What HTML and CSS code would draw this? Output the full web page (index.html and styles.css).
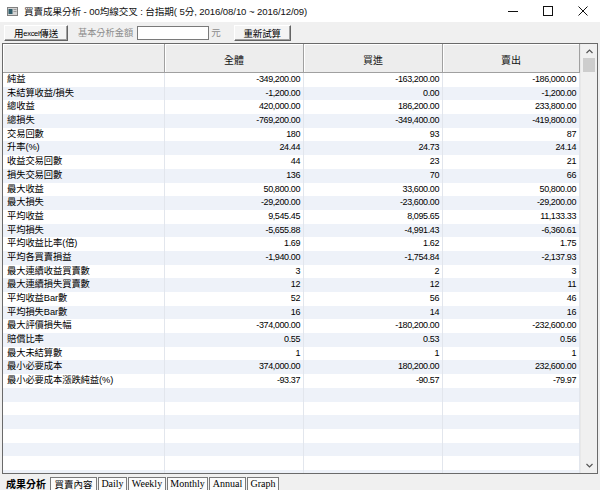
FILE: index.html
```html
<!DOCTYPE html>
<html lang="zh-Hant">
<head>
<meta charset="utf-8">
<title>買賣成果分析</title>
<link rel="stylesheet" href="styles.css">
</head>
<body>
<div class="win">
  <div class="titlebar">
    <svg class="appicon" width="11" height="9" viewBox="0 0 11 9"><rect x="0.5" y="0.5" width="10" height="8" fill="#d4d4d4" stroke="#808080"/><rect x="1.5" y="2" width="4" height="5" fill="#2f5d6b"/><rect x="6.5" y="2" width="3" height="1" fill="#9a9a9a"/><rect x="6.5" y="4" width="3" height="1" fill="#9a9a9a"/></svg>
    <div class="title">買賣成果分析 - 00均線交叉 : 台指期( 5分, 2016/08/10 ~ 2016/12/09)</div>
    <div class="controls">
      <div class="ctl"><svg width="10" height="10" viewBox="0 0 10 10"><line x1="0" y1="5.5" x2="10" y2="5.5" stroke="#111" stroke-width="1"/></svg></div>
      <div class="ctl"><svg width="10" height="10" viewBox="0 0 10 10"><rect x="0.5" y="0.5" width="9" height="9" fill="none" stroke="#111" stroke-width="1"/></svg></div>
      <div class="ctl"><svg width="10" height="10" viewBox="0 0 10 10"><path d="M0.5 0.5 L9.5 9.5 M9.5 0.5 L0.5 9.5" stroke="#111" stroke-width="1"/></svg></div>
    </div>
  </div>

  <div class="toolbar">
    <div class="btn b1">用<span class="small">excel</span>傳送</div>
    <div class="lbl">基本分析金額</div>
    <div class="input"></div>
    <div class="unit">元</div>
    <div class="btn b2">重新試算</div>
  </div>

  <div class="grid">
    <div class="table">
      <div class="row hdr">
        <div class="hc"></div>
        <div class="hc">全體</div>
        <div class="hc">買進</div>
        <div class="hc">賣出</div>
      </div>
      <div class="row"><div class="c l">純益</div><div class="c n">-349,200.00</div><div class="c n">-163,200.00</div><div class="c n">-186,000.00</div></div>
      <div class="row"><div class="c l">未結算收益/損失</div><div class="c n">-1,200.00</div><div class="c n">0.00</div><div class="c n">-1,200.00</div></div>
      <div class="row"><div class="c l">總收益</div><div class="c n">420,000.00</div><div class="c n">186,200.00</div><div class="c n">233,800.00</div></div>
      <div class="row"><div class="c l">總損失</div><div class="c n">-769,200.00</div><div class="c n">-349,400.00</div><div class="c n">-419,800.00</div></div>
      <div class="row"><div class="c l">交易回數</div><div class="c n">180</div><div class="c n">93</div><div class="c n">87</div></div>
      <div class="row"><div class="c l">升率(%)</div><div class="c n">24.44</div><div class="c n">24.73</div><div class="c n">24.14</div></div>
      <div class="row"><div class="c l">收益交易回數</div><div class="c n">44</div><div class="c n">23</div><div class="c n">21</div></div>
      <div class="row"><div class="c l">損失交易回數</div><div class="c n">136</div><div class="c n">70</div><div class="c n">66</div></div>
      <div class="row"><div class="c l">最大收益</div><div class="c n">50,800.00</div><div class="c n">33,600.00</div><div class="c n">50,800.00</div></div>
      <div class="row"><div class="c l">最大損失</div><div class="c n">-29,200.00</div><div class="c n">-23,600.00</div><div class="c n">-29,200.00</div></div>
      <div class="row"><div class="c l">平均收益</div><div class="c n">9,545.45</div><div class="c n">8,095.65</div><div class="c n">11,133.33</div></div>
      <div class="row"><div class="c l">平均損失</div><div class="c n">-5,655.88</div><div class="c n">-4,991.43</div><div class="c n">-6,360.61</div></div>
      <div class="row"><div class="c l">平均收益比率(倍)</div><div class="c n">1.69</div><div class="c n">1.62</div><div class="c n">1.75</div></div>
      <div class="row"><div class="c l">平均各買賣損益</div><div class="c n">-1,940.00</div><div class="c n">-1,754.84</div><div class="c n">-2,137.93</div></div>
      <div class="row"><div class="c l">最大連續收益買賣數</div><div class="c n">3</div><div class="c n">2</div><div class="c n">3</div></div>
      <div class="row"><div class="c l">最大連續損失買賣數</div><div class="c n">12</div><div class="c n">12</div><div class="c n">11</div></div>
      <div class="row"><div class="c l">平均收益Bar數</div><div class="c n">52</div><div class="c n">56</div><div class="c n">46</div></div>
      <div class="row"><div class="c l">平均損失Bar數</div><div class="c n">16</div><div class="c n">14</div><div class="c n">16</div></div>
      <div class="row"><div class="c l">最大評價損失幅</div><div class="c n">-374,000.00</div><div class="c n">-180,200.00</div><div class="c n">-232,600.00</div></div>
      <div class="row"><div class="c l">賠償比率</div><div class="c n">0.55</div><div class="c n">0.53</div><div class="c n">0.56</div></div>
      <div class="row"><div class="c l">最大未結算數</div><div class="c n">1</div><div class="c n">1</div><div class="c n">1</div></div>
      <div class="row"><div class="c l">最小必要成本</div><div class="c n">374,000.00</div><div class="c n">180,200.00</div><div class="c n">232,600.00</div></div>
      <div class="row"><div class="c l">最小必要成本漲跌純益(%)</div><div class="c n">-93.37</div><div class="c n">-90.57</div><div class="c n">-79.97</div></div>
      <div class="row"><div class="c l"></div><div class="c n"></div><div class="c n"></div><div class="c n"></div></div>
      <div class="row"><div class="c l"></div><div class="c n"></div><div class="c n"></div><div class="c n"></div></div>
      <div class="row"><div class="c l"></div><div class="c n"></div><div class="c n"></div><div class="c n"></div></div>
      <div class="row"><div class="c l"></div><div class="c n"></div><div class="c n"></div><div class="c n"></div></div>
      <div class="row"><div class="c l"></div><div class="c n"></div><div class="c n"></div><div class="c n"></div></div>
      <div class="row"><div class="c l"></div><div class="c n"></div><div class="c n"></div><div class="c n"></div></div>
      <div class="row"><div class="c l"></div><div class="c n"></div><div class="c n"></div><div class="c n"></div></div>
    </div>
    <div class="vscroll">
      <div class="arrow up"><svg width="7" height="5" viewBox="0 0 7 5"><path d="M0.5 4 L3.5 1 L6.5 4" fill="none" stroke="#555" stroke-width="1.2"/></svg></div>
      <div class="thumb"></div>
      <div class="track"></div>
      <div class="arrow down"><svg width="7" height="5" viewBox="0 0 7 5"><path d="M0.5 1 L3.5 4 L6.5 1" fill="none" stroke="#555" stroke-width="1.2"/></svg></div>
    </div>
  </div>

  <div class="tabs">
    <div class="tab sel t1">成果分析</div>
    <div class="tab t2">買賣內容</div>
    <div class="tab t3">Daily</div>
    <div class="tab t4">Weekly</div>
    <div class="tab t5">Monthly</div>
    <div class="tab t6">Annual</div>
    <div class="tab t7">Graph</div>
  </div>
</div>
</body>
</html>
```

FILE: styles.css
```css
* { box-sizing: border-box; margin: 0; padding: 0; }
html, body { width: 600px; height: 490px; overflow: hidden; }
body {
  background: #f0f0f0;
  color: #000;
  font-family: "Liberation Sans", "Noto Sans CJK TC", sans-serif;
}
.win { width: 600px; height: 490px; display: flex; flex-direction: column; }

/* title bar */
.titlebar {
  flex: none; height: 22px; background: #fff;
  display: flex; align-items: center;
}
.appicon { margin-left: 7px; flex: none; }
.title {
  margin-left: 6px; font-size: 9.6px; letter-spacing: -0.1px;
  white-space: nowrap; color: #111;
}
.controls { margin-left: auto; display: flex; height: 22px; }
.ctl { width: 35px; height: 22px; display: flex; align-items: center; justify-content: center; }

/* toolbar */
.toolbar {
  flex: none; height: 21px; display: flex; align-items: flex-start;
  padding-top: 3px; padding-left: 4px; background: #f0f0f0;
}
.btn {
  height: 16px; font-size: 9.5px; display: flex; align-items: center; justify-content: center;
  background: #f4f4f4;
  border-top: 1px solid #fff; border-left: 1px solid #fff;
  border-right: 1px solid #646464; border-bottom: 1px solid #646464;
  box-shadow: inset -1px -1px 0 #a0a0a0;
  letter-spacing: -0.2px; white-space: nowrap;
}
.btn .small { font-size: 7.5px; letter-spacing: -0.3px; }
.b1 { width: 64px; }
.b2 { width: 57px; margin-left: 13px; }
.lbl { margin-left: 10px; font-size: 9.2px; color: #8c8c8c; line-height: 16px; white-space: nowrap; }
.input {
  margin-left: 4px; margin-top: 1px; width: 72px; height: 14px; background: #fff;
  border: 1px solid #7a7a7a;
}
.unit { margin-left: 2px; font-size: 9.5px; color: #8c8c8c; line-height: 16px; }

/* grid */
.grid {
  flex: none; margin-left: 2px; width: 596px; height: 431px;
  border: 1px solid #6a6a6a; background: #fff;
  display: flex; overflow: hidden;
}
.table { width: 577px; flex: none; overflow: hidden; }
.row {
  display: grid; grid-template-columns: 162px 139px 139px 137px;
  height: 13.7px; background: #fff;
}
.row:nth-child(odd) { background: #eef2f9; }
.row.hdr { height: 29px; background: #ededed; }
.hc {
  border-right: 1px solid #a0a0a0; border-bottom: 1px solid #a0a0a0;
  box-shadow: inset 1px 1px 0 #fff;
  font-size: 10px; display: flex; align-items: center; justify-content: center;
  padding-top: 3px; color: #111;
}
.c {
  border-right: 1px solid #e2e6ed; line-height: 13.7px; white-space: nowrap; overflow: hidden;
}
.c.l { padding-left: 4px; font-size: 9.3px; letter-spacing: -0.1px; }
.c.n { text-align: right; padding-right: 3px; font-size: 9px; letter-spacing: -0.4px; }

/* scrollbar */
.vscroll {
  width: 17px; flex: none; background: #f0f0f0;
  display: flex; flex-direction: column; align-items: center;
  border-left: 1px solid #e8e8e8;
}
.arrow { height: 14px; width: 100%; display: flex; align-items: center; justify-content: center; flex: none; }
.arrow.down { height: 16px; }
.thumb { width: 12px; height: 14px; background: #cdcdcd; flex: none; }
.track { flex: 1; }

/* tabs */
.tabs {
  flex: 1; display: flex; align-items: flex-start;
  padding-top: 3px; padding-left: 4px; background: #f0f0f0;
}
.tab {
  height: 13px; background: #fbfbfb;
  border: 1px solid #7a7a7a; border-bottom: none;
  font-family: "Liberation Serif", "Noto Sans CJK TC", serif; font-size: 10px;
  line-height: 12px; text-align: center;
  margin-left: 1px; white-space: nowrap;
}
.tab.sel {
  background: transparent; border-color: transparent;
  font-family: "Noto Sans CJK TC", sans-serif; font-weight: bold; font-size: 10px;
  margin-left: 0;
}
.t1 { width: 44px; }
.t2 { width: 47px; margin-left: 2px; font-family: "Noto Sans CJK TC", sans-serif; font-size: 9.5px; }
.t3 { width: 29px; }
.t4 { width: 38px; }
.t5 { width: 41px; }
.t6 { width: 37px; }
.t7 { width: 32px; }
```
